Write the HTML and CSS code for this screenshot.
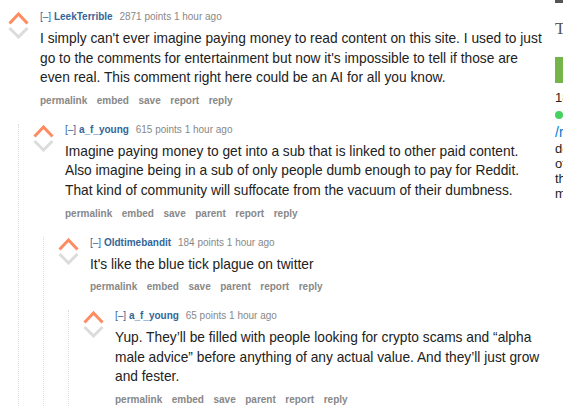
FILE: index.html
```html
<!DOCTYPE html>
<html lang="en">
<head>
    <meta charset="UTF-8">
    <title>comments</title>
    <link rel="stylesheet" href="styles.css">
</head>
<body>
    <div class="page">
        <div class="comments">
            <div class="comment">
                <div class="votes">
                    <svg class="arrows" width="21" height="27" viewBox="0 0 21 27"><polyline class="up" points="1.5,11.5 10.5,2 19.5,11.5"/><polyline class="down" points="1.5,16 10.5,25 19.5,16"/></svg>
                </div>
                <div class="entry">
                    <p class="tagline"><a class="expand">[–]</a> <a class="author">LeekTerrible</a> <span class="score">2871 points 1 hour ago</span></p>
                    <div class="md">I simply can't ever imagine paying money to read content on this site. I used to just go to the comments for entertainment but now it's impossible to tell if those are even real. This comment right here could be an AI for all you know.</div>
                    <ul class="buttons">
                        <li>permalink</li><li>embed</li><li>save</li><li>report</li><li>reply</li>
                    </ul>
                </div>
            </div>
            <div class="child">
                <div class="comment">
                    <div class="votes">
                        <svg class="arrows" width="21" height="27" viewBox="0 0 21 27"><polyline class="up" points="1.5,11.5 10.5,2 19.5,11.5"/><polyline class="down" points="1.5,16 10.5,25 19.5,16"/></svg>
                    </div>
                    <div class="entry">
                        <p class="tagline"><a class="expand">[–]</a> <a class="author">a_f_young</a> <span class="score">615 points 1 hour ago</span></p>
                        <div class="md">Imagine paying money to get into a sub that is linked to other paid content. Also imagine being in a sub of only people dumb enough to pay for Reddit. That kind of community will suffocate from the vacuum of their dumbness.</div>
                        <ul class="buttons">
                            <li>permalink</li><li>embed</li><li>save</li><li>parent</li><li>report</li><li>reply</li>
                        </ul>
                    </div>
                </div>
                <div class="child">
                    <div class="comment">
                        <div class="votes">
                            <svg class="arrows" width="21" height="27" viewBox="0 0 21 27"><polyline class="up" points="1.5,11.5 10.5,2 19.5,11.5"/><polyline class="down" points="1.5,16 10.5,25 19.5,16"/></svg>
                        </div>
                        <div class="entry">
                            <p class="tagline"><a class="expand">[–]</a> <a class="author">Oldtimebandit</a> <span class="score">184 points 1 hour ago</span></p>
                            <div class="md">It's like the blue tick plague on twitter</div>
                            <ul class="buttons">
                                <li>permalink</li><li>embed</li><li>save</li><li>parent</li><li>report</li><li>reply</li>
                            </ul>
                        </div>
                    </div>
                    <div class="child">
                        <div class="comment">
                            <div class="votes">
                                <svg class="arrows" width="21" height="27" viewBox="0 0 21 27"><polyline class="up" points="1.5,11.5 10.5,2 19.5,11.5"/><polyline class="down" points="1.5,16 10.5,25 19.5,16"/></svg>
                            </div>
                            <div class="entry">
                                <p class="tagline"><a class="expand">[–]</a> <a class="author">a_f_young</a> <span class="score">65 points 1 hour ago</span></p>
                                <div class="md">Yup. They’ll be filled with people looking for crypto scams and “alpha male advice” before anything of any actual value. And they’ll just grow and fester.</div>
                                <ul class="buttons">
                                    <li>permalink</li><li>embed</li><li>save</li><li>parent</li><li>report</li><li>reply</li>
                                </ul>
                            </div>
                        </div>
                    </div>
                </div>
            </div>
        </div>

        <div class="side">
            <div class="side-top"></div>
            <h3 class="side-title">The</h3>
            <div class="side-button"></div>
            <p class="side-count">18</p>
            <span class="dot"></span>
            <a class="side-link">/r/</a>
            <p class="side-text">de of th m</p>
        </div>
    </div>
</body>
</html>
```

FILE: styles.css
```css
html {
    overflow: hidden;
}

body {
    margin: 0;
    font-family: "Liberation Sans", Arial, sans-serif;
    background-color: #fff;
}

.page {
    display: flex;
    width: 900px;
}

.comments {
    width: 545px;
    flex-shrink: 0;
    box-sizing: border-box;
    padding: 11px 0 0 8px;
}

.comment {
    display: flex;
}

.votes {
    width: 32px;
    flex-shrink: 0;
    padding-top: 1px;
}

.arrows {
    display: block;
    fill: none;
    stroke-width: 3;
}

.arrows .up {
    stroke: #ff8b60;
}

.arrows .down {
    stroke: #dcdcdc;
}

.entry {
    flex: 1;
}

.tagline {
    margin: 0;
    font-size: 10px;
    line-height: 12px;
    color: #888;
}

.tagline a {
    color: #369;
}

.author {
    font-weight: bold;
    margin-right: 4px;
}

.md {
    font-size: 13.75px;
    line-height: 19.6px;
    color: #222;
    margin: 6px 0 0;
}

.buttons {
    list-style: none;
    margin: 7px 0 0;
    padding: 0;
    display: flex;
    gap: 9.5px;
    font-size: 10px;
    line-height: 12px;
    font-weight: bold;
    color: #888;
}

.child {
    margin: 17px 0 0 10px;
    padding-left: 14px;
    border-left: 1px dotted #ddd;
}

.side {
    width: 300px;
    margin-left: 10px;
    color: #222;
}

.side-top {
    height: 3px;
    background-color: #555;
}

.side-title {
    margin: 16px 0 0;
    font-family: "Liberation Serif", serif;
    font-weight: normal;
    font-size: 17px;
    color: #555;
}

.side-button {
    margin-top: 18px;
    height: 26px;
    background-color: #75b34b;
}

.side-count {
    margin: 7px 0 0;
    font-size: 13px;
}

.dot {
    display: block;
    margin-top: 6px;
    width: 8px;
    height: 8px;
    border-radius: 50%;
    background-color: #46d160;
}

.side-link {
    display: block;
    margin-top: 5px;
    color: #0079d3;
    font-size: 14px;
}

.side-text {
    margin: 1px 0 0;
    font-size: 13px;
    line-height: 15px;
    width: 10px;
}
```
